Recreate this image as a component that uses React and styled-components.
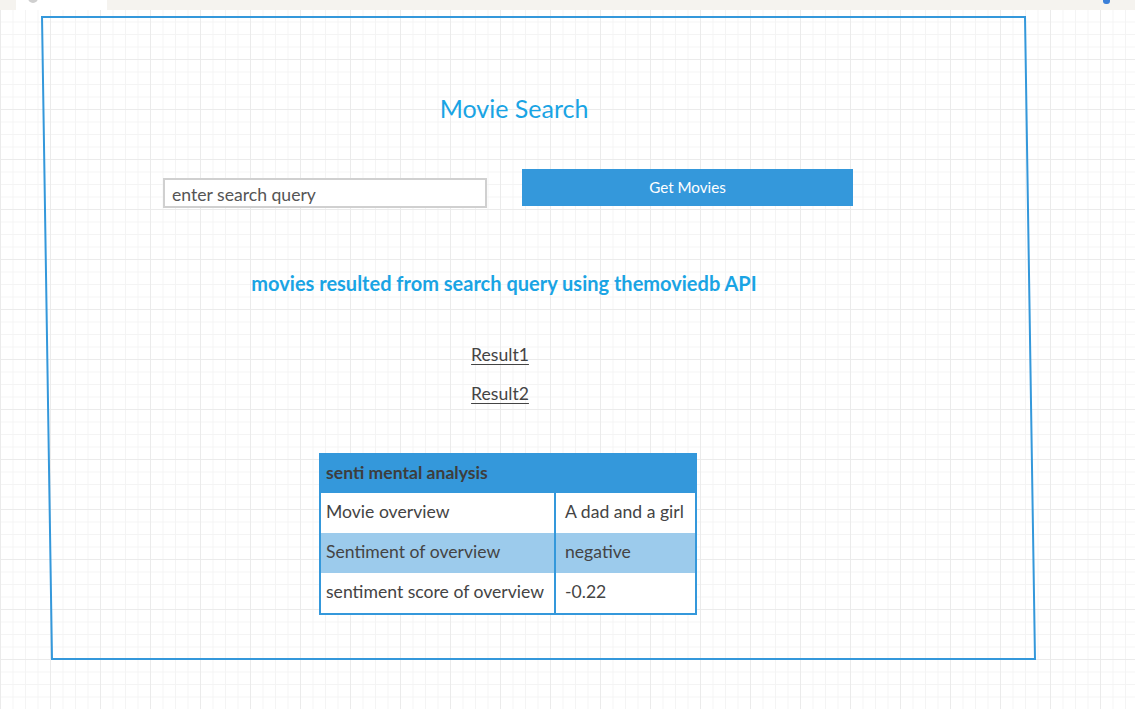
import React from 'react';
import styled, { createGlobalStyle } from 'styled-components';

const GlobalStyle = createGlobalStyle`
  html, body {
    margin: 0;
    padding: 0;
  }

  body {
    width: 1135px;
    height: 709px;
    overflow: hidden;
    font-family: Lato, 'Open Sans', sans-serif;
    background-color: #fff;
    background-image:
      linear-gradient(#ebebeb 1px, transparent 1px),
      linear-gradient(90deg, #ebebeb 1px, transparent 1px),
      linear-gradient(#f4f4f4 1px, transparent 1px),
      linear-gradient(90deg, #f4f4f4 1px, transparent 1px);
    background-size: 50px 50px, 50px 50px, 12.5px 12.5px, 12.5px 12.5px;
    background-position: 0 9px, 0 0, 0 9px, 0 0;
  }
`;

const rows = [
  { label: 'Movie overview', value: 'A dad and a girl' },
  { label: 'Sentiment of overview', value: 'negative', shaded: true },
  { label: 'sentiment score of overview', value: '-0.22' },
];

function App() {
  return (
    <>
      <GlobalStyle />
      <TabStrip>
        <Tab>
          <TabIcon />
        </Tab>
        <StripIcon />
      </TabStrip>
      <Frame>
        <Centered $shift={24.5}>
          <Title>Movie Search</Title>
        </Centered>
        <Controls>
          <SearchInput placeholder="enter search query" />
          <Button>Get Movies</Button>
        </Controls>
        <Centered $shift={34.5}>
          <Subtitle>movies resulted from search query using themoviedb API</Subtitle>
        </Centered>
        <Results $shift={38.5}>
          <ResultLink>Result1</ResultLink>
          <ResultLink>Result2</ResultLink>
        </Results>
        <Table>
          <HeaderRow>senti mental analysis</HeaderRow>
          {rows.map(row => (
            <Row key={row.label} $shaded={row.shaded}>
              <LabelCell>{row.label}</LabelCell>
              <ValueCell>{row.value}</ValueCell>
            </Row>
          ))}
        </Table>
      </Frame>
    </>
  );
}

const TabStrip = styled.div`
  height: 10px;
  background: #f5f3ef;
  display: flex;
  align-items: flex-start;
  overflow: hidden;
`;

const Tab = styled.div`
  width: 91px;
  height: 10px;
  margin-left: 16px;
  background: #fff;
  display: flex;
`;

const TabIcon = styled.div`
  width: 10px;
  height: 10px;
  margin: -7px 0 0 12px;
  border-radius: 50%;
  background: #cfcfcf;
`;

const StripIcon = styled.div`
  width: 7px;
  height: 4px;
  margin-left: auto;
  margin-right: 25px;
  border-radius: 0 0 3px 3px;
  background: #3b7fd8;
`;

const Frame = styled.div`
  position: relative;
  width: 985px;
  height: 644px;
  margin: 6px 0 0 46px;
  box-sizing: border-box;
  display: flex;
  flex-direction: column;

  &::before {
    content: '';
    position: absolute;
    inset: 0;
    border: 2px solid #3498db;
    transform: skewX(0.89deg);
    pointer-events: none;
  }
`;

const Centered = styled.div`
  display: flex;
  justify-content: center;
  padding-right: ${p => p.$shift * 2}px;
`;

const Title = styled.h1`
  margin: 77px 0 0;
  font-size: 25px;
  line-height: 30px;
  font-weight: normal;
  color: #1aa4e4;
`;

const Controls = styled.div`
  display: flex;
  align-items: flex-start;
  gap: 35px;
  margin-top: 46px;
  padding-left: 117px;
`;

const SearchInput = styled.input`
  width: 324px;
  height: 30px;
  margin-top: 9px;
  box-sizing: border-box;
  border: 2px solid #d0d0d0;
  padding: 2px 7px 0;
  font-family: Lato, sans-serif;
  font-size: 17.6px;
  background: #fff;
  outline: none;

  &::placeholder {
    color: #555;
    opacity: 1;
  }
`;

const Button = styled.button`
  width: 331px;
  height: 37px;
  padding: 0 0 2px;
  border: none;
  background: #3498db;
  color: #fff;
  font-family: Lato, sans-serif;
  font-size: 15.2px;
  cursor: pointer;
`;

const Subtitle = styled.h2`
  margin: 63px 0 0;
  font-size: 20px;
  line-height: 24px;
  font-weight: bold;
  color: #1aa4e4;
`;

const Results = styled.div`
  display: flex;
  flex-direction: column;
  align-items: center;
  gap: 19px;
  margin-top: 50px;
  padding-right: ${p => p.$shift * 2}px;
`;

const ResultLink = styled.a`
  font-size: 17.6px;
  line-height: 20px;
  color: #444;
  text-decoration: underline;
  text-underline-offset: 3px;
  text-decoration-thickness: 1px;
  cursor: pointer;
`;

const Table = styled.div`
  width: 378px;
  margin: 49px 0 0 273px;
  border: 2px solid #3498db;
  box-sizing: border-box;
  font-size: 17.6px;
  color: #444;
`;

const HeaderRow = styled.div`
  height: 38px;
  display: flex;
  align-items: center;
  padding: 0 0 4px 5px;
  box-sizing: border-box;
  background: #3498db;
  font-weight: bold;
  color: #3d3d3d;
`;

const Row = styled.div`
  display: grid;
  grid-template-columns: 235px 1fr;
  height: 40px;
  background: ${p => (p.$shaded ? '#9ccbec' : '#fff')};
`;

const LabelCell = styled.div`
  display: flex;
  align-items: center;
  padding: 0 0 3px 5px;
  border-right: 2px solid #3498db;
  white-space: nowrap;
`;

const ValueCell = styled.div`
  display: flex;
  align-items: center;
  padding: 0 0 3px 9px;
  white-space: nowrap;
`;

export default App;
